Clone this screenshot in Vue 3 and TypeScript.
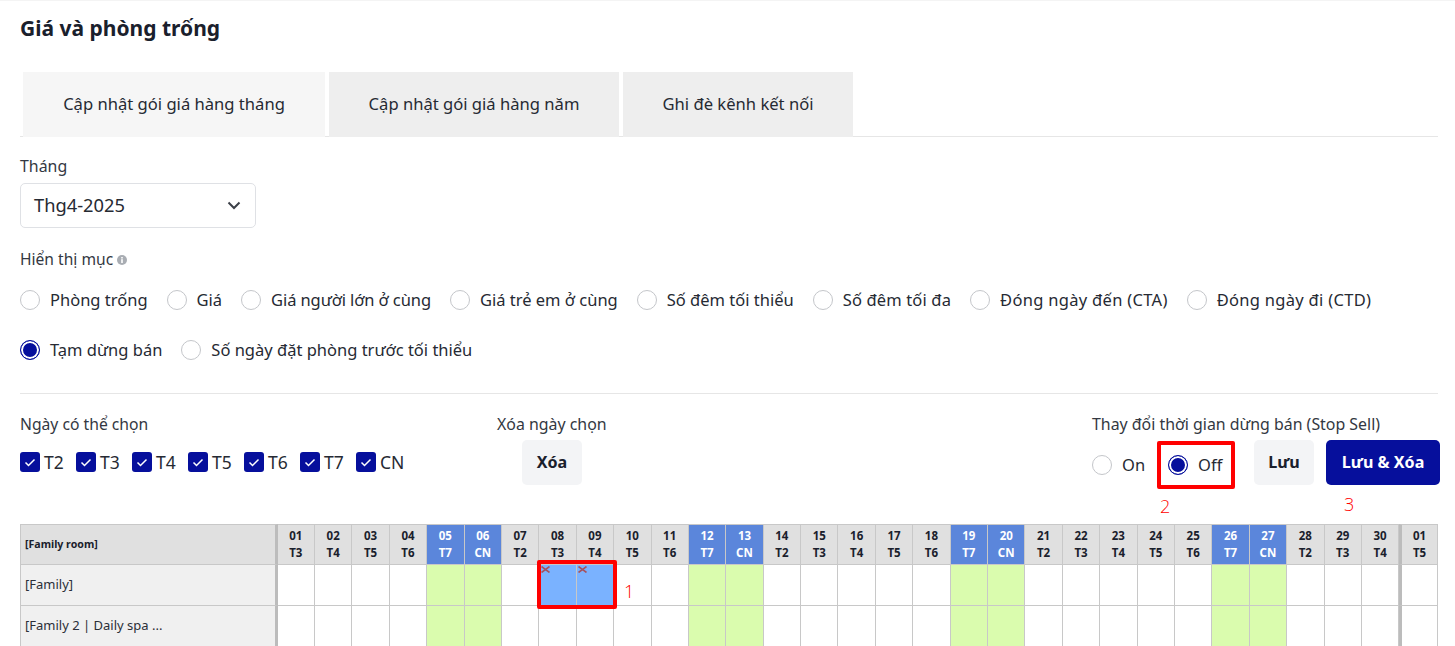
<script setup lang="ts">
const tabs = ['Cập nhật gói giá hàng tháng', 'Cập nhật gói giá hàng năm', 'Ghi đè kênh kết nối']
const row1 = ['Phòng trống', 'Giá', 'Giá người lớn ở cùng', 'Giá trẻ em ở cùng', 'Số đêm tối thiểu', 'Số đêm tối đa', 'Đóng ngày đến (CTA)', 'Đóng ngày đi (CTD)']
const row2 = [
  { t: 'Tạm dừng bán', on: true },
  { t: 'Số ngày đặt phòng trước tối thiểu', on: false }
]
const weekdays = ['T2', 'T3', 'T4', 'T5', 'T6', 'T7', 'CN']
const names = ['T3', 'T4', 'T5', 'T6', 'T7', 'CN', 'T2']
const days = Array.from({ length: 31 }, (_, i) => {
  const name = names[i % 7]
  return {
    d: String(i === 30 ? 1 : i + 1).padStart(2, '0'),
    name,
    weekend: i < 30 && (name === 'T7' || name === 'CN'),
    last: i === 30,
    sel: i === 7 || i === 8
  }
})
const rows = ['[Family]', '[Family 2 | Daily spa ...']
</script>

<template>
  <div class="page">
    <h1 class="title">Giá và phòng trống</h1>

    <div class="tabs">
      <div v-for="(t, i) in tabs" :key="t" class="tab" :class="{ active: i === 0 }">{{ t }}</div>
    </div>

    <div class="label month-label">Tháng</div>
    <div class="select">
      <span>Thg4-2025</span>
      <svg width="14" height="9" viewBox="0 0 14 9"><path d="M1.500 1.500 7 7l5.500-5.500" fill="none" stroke="#3c4048" stroke-width="2" /></svg>
    </div>

    <div class="label show-label">
      Hiển thị mục
      <svg class="info" width="10" height="10" viewBox="0 0 10 10"><circle cx="5" cy="5" r="5" fill="#a9adb3" /><rect x="4.200" y="4.200" width="1.600" height="3.800" fill="#fff" /><rect x="4.200" y="2" width="1.600" height="1.500" fill="#fff" /></svg>
    </div>

    <div class="radios first">
      <label v-for="t in row1" :key="t" class="radio"><span class="dot"></span>{{ t }}</label>
    </div>
    <div class="radios second">
      <label v-for="r in row2" :key="r.t" class="radio"><span class="dot" :class="{ on: r.on }"></span>{{ r.t }}</label>
    </div>

    <hr class="rule" />

    <div class="controls">
      <div class="col-days">
        <div class="label days-label">Ngày có thể chọn</div>
        <div class="checks">
          <span v-for="w in weekdays" :key="w" class="check">
            <span class="box"><svg width="12" height="9" viewBox="0 0 12 9"><path d="M1.500 4.500 4.500 7.500 10.500 1.500" fill="none" stroke="#fff" stroke-width="1.500" /></svg></span>{{ w }}
          </span>
        </div>
      </div>
      <div class="col-clear">
        <div class="label">Xóa ngày chọn</div>
        <button class="btn light clear-btn">Xóa</button>
      </div>
      <div class="col-stop">
        <div class="label">Thay đổi thời gian dừng bán (Stop Sell)</div>
        <div class="stop-row">
          <label class="radio stop-on"><span class="dot"></span>On</label>
          <label class="radio stop-off"><span class="dot on"></span>Off</label>
          <button class="btn light save">Lưu</button>
          <button class="btn primary">Lưu &amp; Xóa</button>
        </div>
      </div>
    </div>

    <div class="grid">
      <div class="corner">[Family room]</div>
      <div
        v-for="(c, i) in days"
        :key="'h' + i"
        class="head"
        :class="{ weekend: c.weekend, last: c.last }"
      >
        <span>{{ c.d }}</span><span>{{ c.name }}</span>
      </div>
      <template v-for="(r, ri) in rows" :key="r">
        <div class="name">{{ r }}</div>
        <div
          v-for="(c, i) in days"
          :key="r + i"
          class="cell"
          :class="{ green: c.weekend, picked: c.sel && ri === 0, last: c.last }"
        >
          <svg v-if="c.sel && ri === 0" class="x" width="9" height="7" viewBox="0 0 9 7"><path d="M.5.5 8.500 6.500M8.500.5 .5 6.500" stroke="#a5525f" stroke-width="1.600" /></svg>
        </div>
      </template>
    </div>

    <div class="mark mark-cells"></div>
    <div class="mark mark-off"></div>
    <span class="num n1">1</span>
    <span class="num n2">2</span>
    <span class="num n3">3</span>
  </div>
</template>

<style>
html, body { margin: 0; background: #fff; overflow: hidden; }
</style>

<style scoped>
.page {
  position: relative;
  height: 646px;
  overflow: hidden;
  box-sizing: border-box;
  padding: 0 15px 0 20px;
  box-shadow: inset 0 1px 0 #f4f4f4;
  font-family: "Noto Sans", "Open Sans", sans-serif;
  font-size: 16.500px;
  color: #262a33;
}
.title {
  margin: 0;
  padding-top: 14px;
  height: 57px;
  box-sizing: border-box;
  font-size: 21px;
  line-height: 28px;
  font-weight: 700;
  color: #1a202c;
}
.tabs {
  display: flex;
  gap: 4px;
  margin-top: 15px;
  margin-right: 2px;
  padding-left: 3px;
  height: 65px;
  box-sizing: border-box;
  border-bottom: 1px solid #e6e6e6;
}
.tab {
  height: 65px;
  padding-bottom: 2px;
  box-sizing: border-box;
  display: flex;
  align-items: center;
  justify-content: center;
  background: #eeeeee;
  font-size: 16.600px;
  white-space: nowrap;
}
.tab:nth-child(1) { width: 302px; background: #f6f6f6; }
.tab:nth-child(2) { width: 290px; }
.tab:nth-child(3) { width: 230px; }
.label { line-height: 20px; font-size: 15.900px; color: #333842; white-space: nowrap; }
.days-label { font-size: 15.700px; }
.month-label { margin-top: 19px; }
.select {
  width: 236px;
  height: 45px;
  box-sizing: border-box;
  margin-top: 7px;
  padding: 0 14px 2px 13px;
  border: 1px solid #dfe1e5;
  border-radius: 5px;
  display: flex;
  align-items: center;
  justify-content: space-between;
  font-size: 18.300px;
}
.select svg { margin-top: 2px; }
.show-label { margin-top: 21px; font-size: 15.600px; display: flex; align-items: center; gap: 4px; }
.info { margin-top: 1px; }
.radios { display: flex; gap: 19px; white-space: nowrap; height: 20px; }
.first { margin-top: 21px; }
.second { margin-top: 30px; }
.first .radio:nth-child(3) { letter-spacing: -0.100px; }
.first .radio:nth-child(6) { letter-spacing: 0.150px; }
.first .radio:nth-child(7),
.first .radio:nth-child(8) { letter-spacing: 0.300px; }
.radio { display: flex; align-items: center; gap: 10px; line-height: 20px; }
.dot {
  width: 20px;
  height: 20px;
  box-sizing: border-box;
  border: 1px solid #c4c6ca;
  border-radius: 50%;
  flex: none;
  background: #fff;
}
.dot.on {
  border: 1px solid #060f9c;
  background: #060f9c;
  box-shadow: inset 0 0 0 2px #fff;
}
.rule { border: 0; border-top: 1px solid #e6e6e6; margin: 33px 2px 0 0; }
.controls { display: flex; margin-top: 20px; height: 110px; }
.col-days { width: 477px; }
.checks { display: flex; margin-top: 18px; }
.check { width: 56px; display: flex; align-items: center; gap: 4px; line-height: 20px; font-size: 17.500px; }
.box {
  width: 20px;
  height: 20px;
  background: #060f9c;
  border-radius: 3px;
  display: flex;
  align-items: center;
  justify-content: center;
}
.col-clear { width: 180px; }
.clear-btn { margin: 6px 0 0 25px; width: 60px; }
.col-stop { margin-left: auto; width: 348px; }
.stop-row { display: flex; align-items: flex-start; margin-top: 6px; }
.stop-on { margin-top: 15px; width: 76px; }
.stop-off { margin-top: 15px; width: 86px; }
.btn {
  height: 45px;
  border: 0;
  border-radius: 5px;
  font: inherit;
  font-weight: 700;
  font-size: 16.100px;
  padding: 0 0 2px;
}
.light { background: #f3f4f6; color: #1a202c; }
.save { width: 60px; margin-right: 12px; }
.primary { width: 114px; background: #060f9c; color: #fff; }
.grid {
  position: absolute;
  left: 20px;
  top: 524px;
  width: 1418px;
  display: grid;
  grid-template-columns: 257.600px repeat(30, 37.400px) 38.400px;
  grid-auto-rows: 41px;
}
.corner, .name {
  box-sizing: border-box;
  border: 1px solid #c8c8c8;
  border-top-width: 0;
  border-right: 3px solid #bcbcbc;
  padding: 0 0 2px 4px;
  display: flex;
  align-items: center;
  white-space: nowrap;
}
.corner {
  border-top-width: 1px;
  background: #e0e0e0;
  font-size: 10.600px;
  font-weight: 700;
  color: #1a202c;
}
.name { background: #f0f0f0; font-size: 13px; color: #2b2f38; }
.head {
  box-sizing: border-box;
  border: 1px solid #c8c8c8;
  border-left: 0;
  padding-bottom: 2px;
  background: #e0e0e0;
  display: flex;
  flex-direction: column;
  align-items: center;
  justify-content: center;
  font-size: 11.500px;
  line-height: 17px;
  font-weight: 700;
  color: #1a202c;
}
.head.weekend { background: #5b86db; color: #fff; }
.cell {
  position: relative;
  box-sizing: border-box;
  border-right: 1px solid #c8c8c8;
  border-bottom: 1px solid #c8c8c8;
  background: #fff;
}
.cell.green { background: #dafcae; }
.cell.picked { background: #7ab2ff; }
.head.last, .cell.last { border-left: 3px solid #bcbcbc; }
.x { position: absolute; left: 1.500px; top: 1px; }
.mark { position: absolute; box-sizing: border-box; border: 4px solid #ff0000; border-radius: 2px; }
.mark-cells { left: 537px; top: 560px; width: 80px; height: 49px; }
.mark-off { left: 1157px; top: 441px; width: 78px; height: 48px; }
.num { position: absolute; color: #ff0000; font-family: "Open Sans", sans-serif; font-weight: 300; font-size: 18px; line-height: 20px; }
.n1 { left: 624px; top: 581px; }
.n2 { left: 1160px; top: 496px; }
.n3 { left: 1344px; top: 494px; }
</style>
